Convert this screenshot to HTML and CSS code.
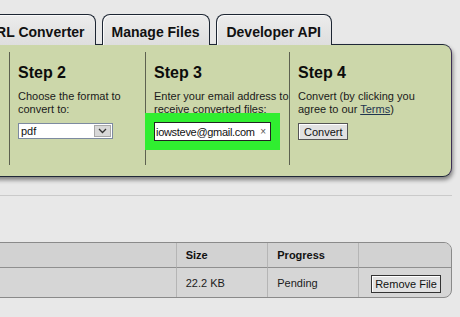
FILE: index.html
```html
<!DOCTYPE html>
<html lang="en">
<head>
    <meta charset="UTF-8">
    <title>File Converter</title>
    <link rel="stylesheet" href="styles.css">
</head>
<body>
    <div class="page">
        <!-- Top tabs -->
        <div class="tabs">
            <div class="tab">URL Converter</div>
            <div class="tab">Manage Files</div>
            <div class="tab">Developer API</div>
        </div>

        <!-- Conversion steps -->
        <div class="panel">
            <div class="step step-format">
                <h3>Step 2</h3>
                <p>Choose the format to<br>convert to:</p>
                <div class="select">
                    <span class="select-value">pdf</span>
                    <span class="select-arrow">
                        <svg width="9" height="6" viewBox="0 0 9 6"><path d="M1 1 L4.5 4.5 L8 1" fill="none" stroke="#333" stroke-width="1.3"/></svg>
                    </span>
                </div>
            </div>
            <div class="step step-email">
                <h3>Step 3</h3>
                <p>Enter your email address to<br>receive converted files:</p>
                <div class="email">
                    <span class="email-text">iowsteve@gmail.com</span>
                    <span class="email-clear">&times;</span>
                </div>
            </div>
            <div class="step step-convert">
                <h3>Step 4</h3>
                <p>Convert (by clicking you<br>agree to our <a href="#terms">Terms</a>)</p>
                <button class="btn">Convert</button>
            </div>
        </div>

        <hr class="rule">

        <!-- File list -->
        <table class="files">
            <thead>
                <tr>
                    <th class="col-name"></th>
                    <th class="col-size">Size</th>
                    <th class="col-progress">Progress</th>
                    <th class="col-action"></th>
                </tr>
            </thead>
            <tbody>
                <tr>
                    <td class="col-name"></td>
                    <td>22.2 KB</td>
                    <td>Pending</td>
                    <td class="col-action"><button class="btn btn-remove">Remove File</button></td>
                </tr>
            </tbody>
        </table>
    </div>
</body>
</html>
```

FILE: styles.css
```css
* {
    margin: 0;
    padding: 0;
    box-sizing: border-box;
}

html, body {
    width: 460px;
    height: 317px;
    overflow: hidden;
}

body {
    font-family: "Liberation Sans", Arial, sans-serif;
    font-size: 11px;
    color: #111;
    background-color: #e8e8e8;
}

.page {
    width: 464px;
    margin-left: -12px;
}

/* Tabs */
.tabs {
    display: flex;
    gap: 6px;
    margin-left: -12px;
    padding-top: 14px;
    height: 45px;
    align-items: flex-end;
    position: relative;
    z-index: 1;
}

.tab {
    height: 31px;
    padding: 9px 10px 0 9px;
    font-size: 14px;
    font-weight: bold;
    color: #111;
    background: linear-gradient(#ececec, #dedede);
    border: 1px solid #1d2633;
    border-bottom: none;
    border-radius: 8px 8px 0 0;
    box-shadow: inset 1px 1px 0 #fafafa;
}

/* Green step panel */
.panel {
    display: flex;
    height: 133px;
    margin-top: -1px;
    padding: 7px 0 11px 20px;
    background-color: #ccd7aa;
    border: 1px solid #1f2838;
    border-right-color: #3c2f55;
    border-radius: 0 9px 9px 0;
    box-shadow: 1px 3px 4px rgba(0, 0, 0, 0.45);
}

.step {
    border-left: 1px solid #5d6150;
    padding: 12px 0 0 8px;
}

.step-format {
    width: 136px;
}

.step-email {
    width: 144px;
}

.step-convert {
    flex: 1;
}

.step h3 {
    font-size: 16px;
    line-height: 18px;
    margin-bottom: 8px;
    color: #0c0c0c;
}

.step p {
    line-height: 13px;
    color: #1a1a1a;
}

.step p a {
    color: #1f3550;
    text-decoration: underline;
}

.select {
    display: flex;
    align-items: center;
    width: 95px;
    height: 16px;
    margin-top: 7px;
    background-color: #fff;
    border: 1px solid #7d8aa0;
}

.select-value {
    flex: 1;
    padding-left: 2px;
}

.select-arrow {
    display: flex;
    align-items: center;
    justify-content: center;
    width: 17px;
    height: 12px;
    margin-right: 1px;
    background-color: #d8d8d8;
    border: 1px solid #a8a8a8;
}

.email {
    display: flex;
    align-items: center;
    width: 117px;
    height: 19px;
    margin-top: 6px;
    overflow: hidden;
    background-color: #fff;
    border: 1px solid #222;
    box-shadow: 0 0 0 9px #30ee30;
}

.email-text {
    flex: 1;
    padding-left: 1px;
    font-size: 11px;
    letter-spacing: -0.3px;
    white-space: nowrap;
    overflow: hidden;
}

.email-clear {
    padding: 0 4px 0 2px;
    font-size: 10px;
    color: #555;
}

.btn {
    font-family: "Liberation Sans", Arial, sans-serif;
    font-size: 11px;
    color: #111;
    height: 17px;
    padding: 0 5px;
    background-color: #e2e2e2;
    border: 1px solid #555;
    box-shadow: inset 1px 1px 0 #fff;
}

.step-convert .btn {
    margin-top: 7px;
    width: 50px;
}

/* Divider */
.rule {
    width: 464px;
    margin-top: 18px;
    border: none;
    border-top: 1px solid #cacaca;
}

/* Files table */
.files {
    width: 476px;
    margin: 46px 0 0 -12px;
    border-collapse: separate;
    border-spacing: 0;
    border: 1px solid #8a8a8a;
    border-radius: 0 8px 8px 0;
    background-color: #d6d6d6;
    overflow: hidden;
}

.files th,
.files td {
    text-align: left;
    padding-left: 9px;
    border-left: 1px solid #b5b5b5;
}

.files th {
    height: 25px;
    font-weight: bold;
    background-color: #d2d2d2;
    border-bottom: 1px solid #8f8f8f;
}

.files td {
    height: 29px;
    color: #1a1a1a;
}

.files .col-name {
    width: 200px;
    border-left: none;
}

.files .col-size {
    width: 92px;
}

.files .col-progress {
    width: 91px;
}

.files .col-action {
    width: 93px;
    padding-left: 12px;
}

.btn-remove {
    width: 70px;
    height: 18px;
    padding: 0;
    margin-top: 2px;
    border-color: #333;
}
```
